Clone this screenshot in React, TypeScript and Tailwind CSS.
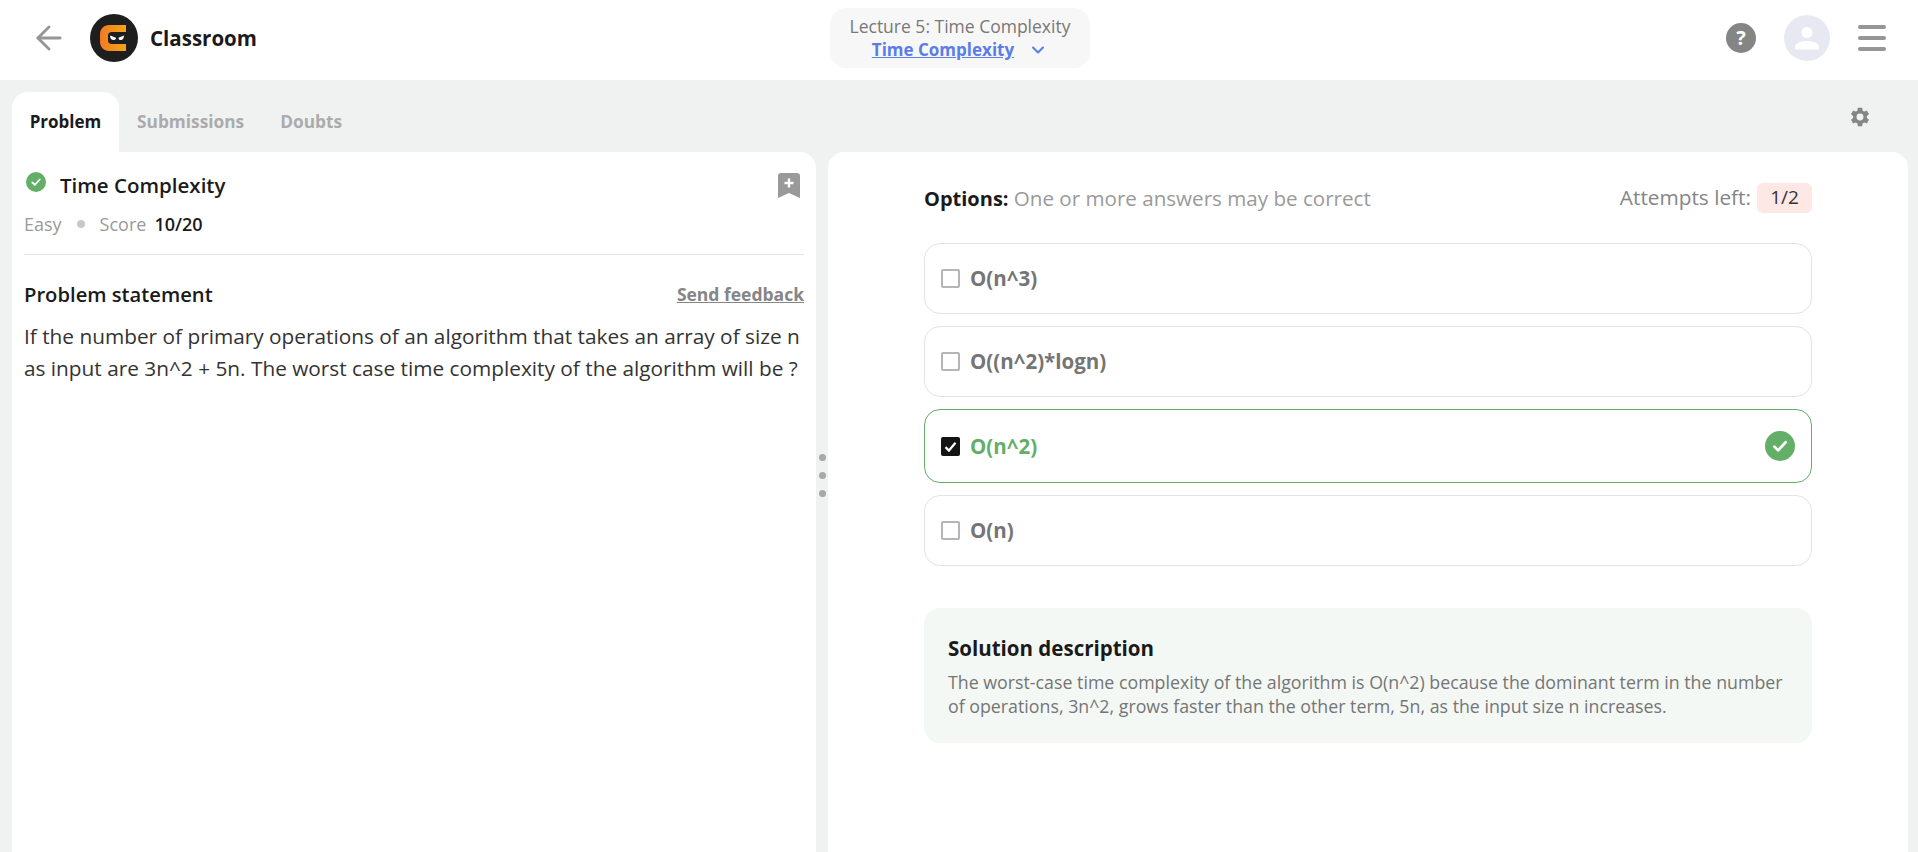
import { ArrowLeft, ChevronDown } from "lucide-react";

const fontStack = "font-['Open_Sans','Noto_Sans',sans-serif]";

interface Option {
  id: number;
  label: string;
  correct?: boolean;
}

const options: Option[] = [
  { id: 1, label: "O(n^3)" },
  { id: 2, label: "O((n^2)*logn)" },
  { id: 3, label: "O(n^2)", correct: true },
  { id: 4, label: "O(n)" },
];

const CheckBadge = ({ size }: { size: number }) => (
  <svg width={size} height={size} viewBox="0 0 24 24" className="shrink-0">
    <circle cx="12" cy="12" r="12" fill="#63af67" />
    <path d="M7.5 12.5l3 3 6-6.5" fill="none" stroke="#fff" strokeWidth="2.2" strokeLinecap="round" strokeLinejoin="round" />
  </svg>
);

const Logo = () => (
  <svg width="48" height="48" viewBox="0 0 48 48" className="shrink-0">
    <defs>
      <linearGradient id="logoFill" x1="0" y1="0" x2="1" y2="0">
        <stop offset="0" stopColor="#f07a24" />
        <stop offset="1" stopColor="#f5a516" />
      </linearGradient>
    </defs>
    <circle cx="24" cy="24" r="24" fill="#1e1e1e" />
    <path d="M19 11h17v7H21.500c-2 0-3.500 1.500-3.500 3.500v5c0 2 1.500 3.500 3.500 3.500H36v7H19c-5 0-9-4-9-9v-8c0-5 4-9 9-9z" fill="url(#logoFill)" />
    <path d="M20 21.500l6 2.200c0 1.500-.9 2.300-2.600 2.300-2 0-3.400-1.800-3.400-4.500zM34 21.500l-5.500 2.200c0 1.500.8 2.300 2.400 2.300 1.900 0 3.100-1.800 3.100-4.500z" fill="#fff" />
  </svg>
);

const Gear = () => (
  <svg width="22" height="22" viewBox="0 0 24 24" fill="#858585">
    <path
      fillRule="evenodd"
      d="M19.430 12.980c.04-.32.070-.64.070-.98s-.03-.66-.07-.98l2.110-1.650c.19-.15.240-.42.120-.64l-2-3.460c-.12-.22-.39-.3-.61-.22l-2.490 1c-.52-.4-1.080-.73-1.690-.98l-.38-2.650C14.460 2.180 14.250 2 14 2h-4c-.25 0-.46.180-.49.420l-.38 2.650c-.61.250-1.170.590-1.690.980l-2.490-1c-.23-.090-.49 0-.61.220l-2 3.460c-.13.220-.07.490.120.640l2.110 1.650c-.04.320-.07.650-.07.980s.03.660.07.980l-2.110 1.650c-.19.150-.24.420-.12.640l2 3.460c.12.220.39.300.61.220l2.490-1c.52.400 1.080.730 1.690.980l.38 2.650c.03.240.24.420.49.420h4c.25 0 .46-.18.49-.42l.38-2.650c.61-.25 1.170-.59 1.690-.98l2.490 1c.23.090.49 0 .61-.22l2-3.460c.12-.22.07-.49-.12-.64l-2.110-1.650zM12 15.800a3.800 3.800 0 1 1 0-7.600 3.800 3.800 0 0 1 0 7.600z"
    />
  </svg>
);

const OptionRow = ({ option }: { option: Option }) => {
  if (option.correct) {
    return (
      <div className="flex h-[74px] items-center justify-between rounded-2xl border border-[#63af67] pl-4 pr-4">
        <div className="flex items-center gap-[10px]">
          <div className="flex h-[19px] w-[19px] items-center justify-center rounded-[2px] bg-[#141414]">
            <svg width="15" height="15" viewBox="0 0 24 24">
              <path d="M4 13l5.500 5.500L20 6" fill="none" stroke="#fff" strokeWidth="3.500" />
            </svg>
          </div>
          <span className="text-[20.500px] font-bold text-[#63af67]">{option.label}</span>
        </div>
        <CheckBadge size={30} />
      </div>
    );
  }
  return (
    <div className="flex h-[71px] items-center rounded-2xl border border-[#e3e3e3] pl-4 pr-4">
      <div className="flex items-center gap-[10px]">
        <div className="h-[19px] w-[19px] rounded-[2px] border-2 border-[#b5b5b5]" />
        <span className="text-[20.500px] font-bold text-[#757575]">{option.label}</span>
      </div>
    </div>
  );
};

export default function App() {
  return (
    <div className={`flex h-[852px] flex-col overflow-hidden bg-[#f0f2f2] ${fontStack}`}>
      <header className="grid h-[80px] shrink-0 grid-cols-3 items-center bg-white pb-1 pl-[30px] pr-[32px]">
        <div className="flex items-center">
          <ArrowLeft size={38} strokeWidth={1.800} className="text-[#969696]" />
          <div className="ml-[22px] flex items-center gap-3">
            <Logo />
            <span className="text-[20.500px] font-bold text-[#1a1a1a]">Classroom</span>
          </div>
        </div>
        <div className="flex justify-center pl-[4px]">
          <div className="flex h-[60px] w-[260px] flex-col items-center justify-center rounded-2xl bg-[#f7f7f7]">
            <span className="text-[17.500px] leading-6 text-[#787878]">Lecture 5: Time Complexity</span>
            <div className="flex items-center gap-[14px]">
              <span className="text-[17px] font-bold leading-6 text-[#5b7de8] underline">Time Complexity</span>
              <ChevronDown size={20} strokeWidth={2.500} className="text-[#5b7de8]" />
            </div>
          </div>
        </div>
        <div className="flex items-center justify-end gap-[28px]">
          <div className="flex h-[30px] w-[30px] items-center justify-center rounded-full bg-[#858585] text-xl font-bold text-white">?</div>
          <div className="flex h-[46px] w-[46px] items-center justify-center rounded-full bg-[#e8e8f2]">
            <svg width="28" height="28" viewBox="0 0 28 28">
              <circle cx="14" cy="8.500" r="5.500" fill="#fff" />
              <path d="M2 24c0-5 5-7 12-7s12 2 12 7c0 1-1 1.500-2 1.500H4c-1 0-2-.5-2-1.500z" fill="#fff" />
            </svg>
          </div>
          <div className="flex w-[28px] flex-col gap-[7px]">
            <div className="h-[4px] rounded-full bg-[#969696]" />
            <div className="h-[4px] rounded-full bg-[#969696]" />
            <div className="h-[4px] rounded-full bg-[#969696]" />
          </div>
        </div>
      </header>

      <div className="flex min-h-0 flex-1 pl-3 pr-[10px] pt-3">
        <div className="flex w-[804px] shrink-0 flex-col">
          <div className="flex h-[60px] shrink-0 items-center">
            <div className="flex h-full w-[107px] items-center justify-center rounded-t-2xl bg-white text-[17px] font-bold text-[#1a1a1a]">Problem</div>
            <span className="ml-[18px] text-[17.300px] font-bold text-[#ababab]">Submissions</span>
            <span className="ml-[36px] text-[17.300px] font-bold text-[#ababab]">Doubts</span>
          </div>
          <section className="flex-1 rounded-tr-2xl bg-white pl-3 pr-3 pt-[19px]">
            <div className="flex items-start justify-between">
              <div className="flex items-center gap-[14px] pl-[2px]">
                <div className="mb-[6px]">
                  <CheckBadge size={20} />
                </div>
                <h1 className="text-[20.500px] font-semibold leading-7 text-[#1a1a1a]">Time Complexity</h1>
              </div>
              <svg width="22" height="26" viewBox="0 0 22 26" className="mr-[4px] mt-[2px]">
                <path d="M3 0h16a3 3 0 0 1 3 3v22l-11-5-11 5V3a3 3 0 0 1 3-3z" fill="#999" />
                <path d="M11 5.500v9M6.500 10h9" stroke="#fff" strokeWidth="2.400" />
              </svg>
            </div>
            <div className="mt-[13px] flex items-center text-[18px] leading-6">
              <span className="text-[#9a9a9a]">Easy</span>
              <span className="mx-[15px] h-[8px] w-[8px] rounded-full bg-[#c8c8c8]" />
              <span className="text-[#9a9a9a]">Score</span>
              <span className="ml-2 font-semibold text-[#1a1a1a]">10/20</span>
            </div>
            <div className="mt-[18px] h-px bg-[#e3e3e3]" />
            <div className="mt-[26px] flex items-center justify-between">
              <h2 className="text-[20.200px] font-semibold leading-6 text-[#1a1a1a]">Problem statement</h2>
              <a className="text-[17.500px] font-bold text-[#858585] underline">Send feedback</a>
            </div>
            <p className="mt-[13px] text-[20.800px] leading-[32px] text-[#333]">
              If the number of primary operations of an algorithm that takes an array of size n as input are 3n^2 + 5n. The worst case time complexity of the algorithm will be ?
            </p>
          </section>
        </div>

        <div className="flex w-[12px] shrink-0 flex-col items-center justify-center gap-[11px] pt-[6px]">
          <span className="h-[7px] w-[7px] rounded-full bg-[#a8a8a8]" />
          <span className="h-[7px] w-[7px] rounded-full bg-[#a8a8a8]" />
          <span className="h-[7px] w-[7px] rounded-full bg-[#a8a8a8]" />
        </div>

        <div className="flex min-w-0 flex-1 flex-col">
          <div className="flex h-[60px] shrink-0 items-start justify-end pr-[37px] pt-[14px]">
            <Gear />
          </div>
          <section className="flex-1 rounded-t-2xl bg-white pl-[96px] pr-[96px] pt-[30px]">
            <div className="flex items-center justify-between">
              <p className="pt-[1px] text-[20px] leading-6">
                <span className="font-bold text-[#1a1a1a]">Options: </span>
                <span className="text-[20.600px] text-[#9a9a9a]">One or more answers may be correct</span>
              </p>
              <div className="flex items-center gap-[6px] text-[20.800px]">
                <span className="text-[#858585]">Attempts left:</span>
                <span className="flex h-[30px] w-[55px] items-center justify-center rounded-md bg-[#fde8e6] text-[19px] text-[#333]">1/2</span>
              </div>
            </div>
            <div className="mt-[30px] flex flex-col gap-3">
              {options.map((option) => (
                <OptionRow key={option.id} option={option} />
              ))}
            </div>
            <div className="mt-[42px] rounded-2xl bg-[#f4f8f5] px-6 pb-[25px] pt-[28px]">
              <h3 className="text-[20.500px] font-bold leading-6 text-[#1a1a1a]">Solution description</h3>
              <p className="mt-[10px] text-[17.800px] leading-6 text-[#757575]">
                The worst-case time complexity of the algorithm is O(n^2) because the dominant term in the number of operations, 3n^2, grows faster than the other term, 5n, as the input size n increases.
              </p>
            </div>
          </section>
        </div>
      </div>
    </div>
  );
}
